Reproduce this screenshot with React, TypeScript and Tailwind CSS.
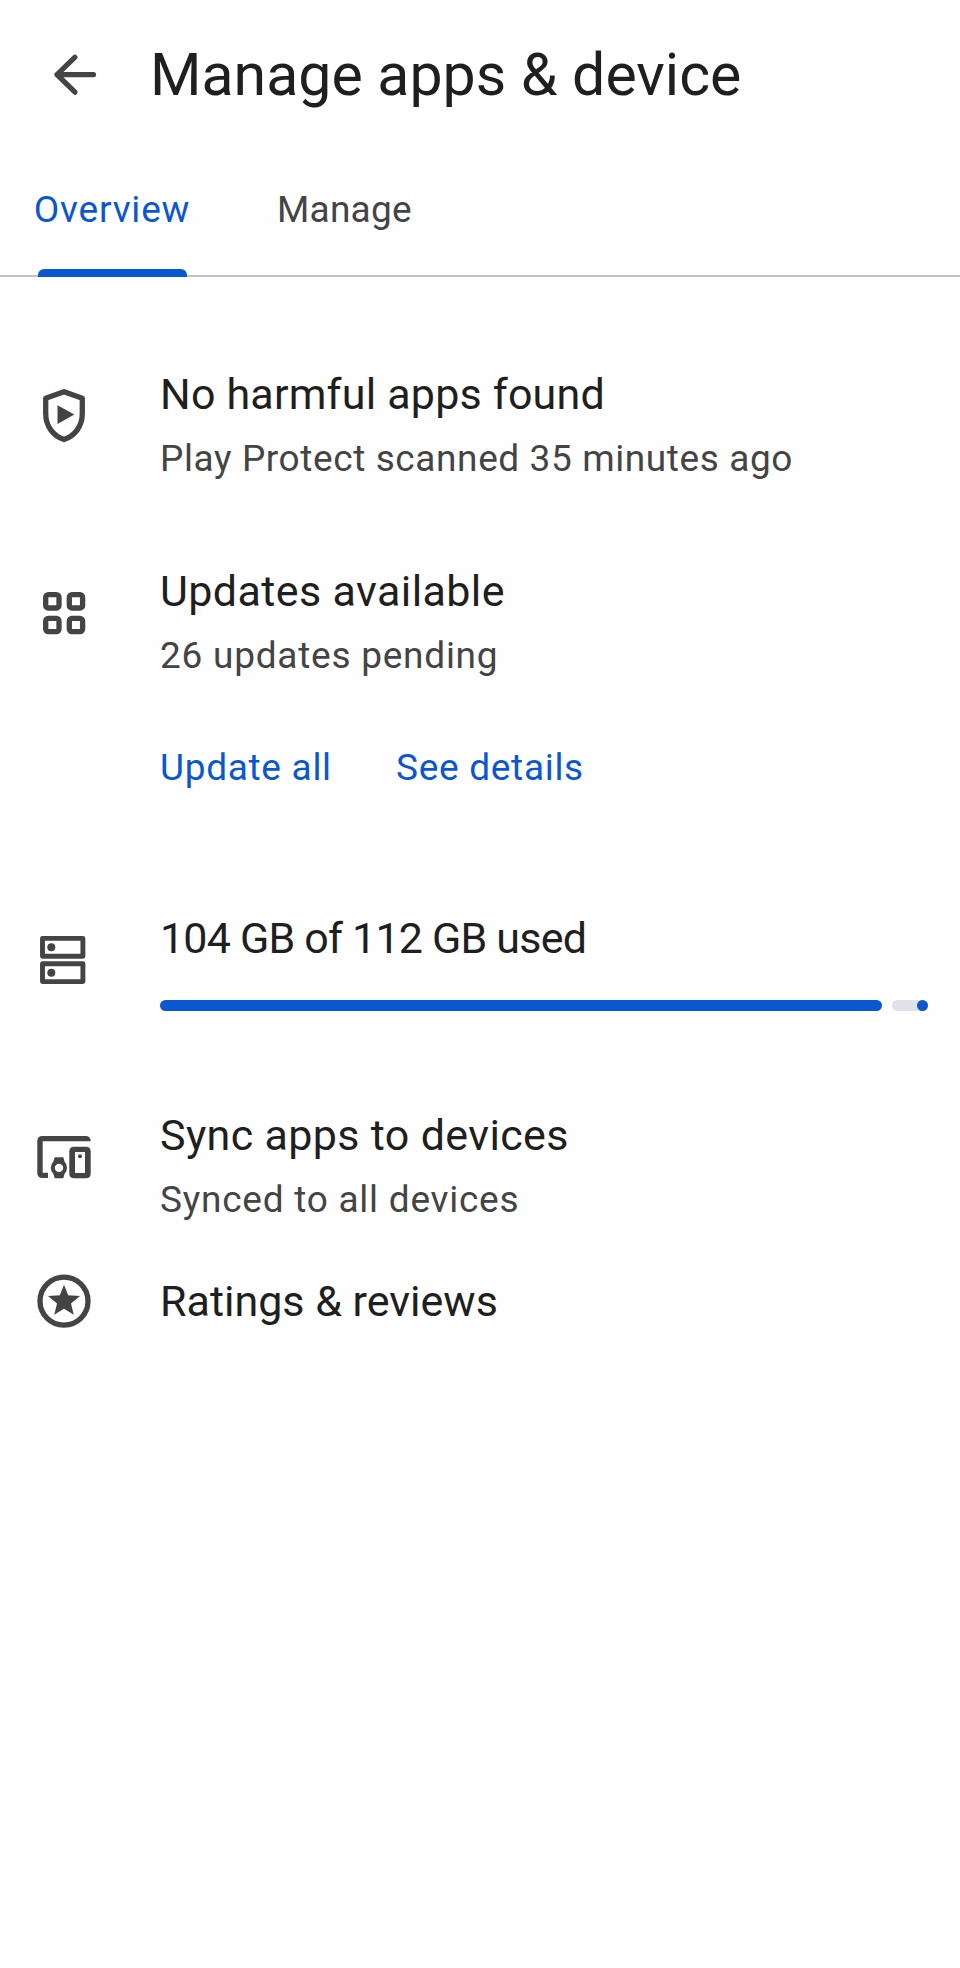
import type { ReactNode } from "react";

function Icon({ children }: { children: ReactNode }) {
  return (
    <svg className="size-16 shrink-0" viewBox="0 0 64 64" fill="currentColor">
      {children}
    </svg>
  );
}

const ShieldIcon = () => (
  <Icon>
    <path
      d="M32 7.7 50.3 14.2V29.5C50.3 42.5 42.5 52 32 55.5 21.5 52 13.7 42.5 13.7 29.5V14.2Z"
      fill="none"
      stroke="currentColor"
      strokeWidth="5.3"
      strokeLinejoin="round"
    />
    <path d="M25.5 21.3v18.6L42.3 30.5Z" />
  </Icon>
);

const AppsIcon = () => (
  <Icon>
    <g fill="none" stroke="currentColor" strokeWidth="5.3">
      <rect x="13.7" y="13.7" width="13.3" height="13.3" rx="2.6" />
      <rect x="37.3" y="13.7" width="13.3" height="13.3" rx="2.6" />
      <rect x="13.7" y="37.3" width="13.3" height="13.3" rx="2.6" />
      <rect x="37.3" y="37.3" width="13.3" height="13.3" rx="2.6" />
    </g>
  </Icon>
);

const StorageIcon = () => (
  <Icon>
    <g fill="none" stroke="currentColor" strokeWidth="4.9" strokeLinejoin="round">
      <rect x="10.5" y="10.4" width="40.4" height="17.8" />
      <rect x="10.5" y="35.8" width="40.4" height="17.8" />
    </g>
    <circle cx="19.3" cy="19.3" r="4" />
    <circle cx="19.3" cy="44.7" r="4" />
  </Icon>
);

const DevicesIcon = () => (
  <Icon>
    <path d="M5.3 16.3Q5.3 11 10.6 11H53.4Q58.7 11 58.7 16.3H10.7V47.7H16V53H10.6Q5.3 53 5.3 47.7Z" />
    <path
      fillRule="evenodd"
      d="M42 21.7H54Q58.7 21.7 58.7 26.4V48.6Q58.7 53.3 54 53.3H42Q37.3 53.3 37.3 48.6V26.4Q37.3 21.7 42 21.7ZM43 27V48H53V27Z"
    />
    <circle cx="48" cy="31.3" r="2" />
    <path
      fillRule="evenodd"
      d="M22.7 32.3H31.3L32.5 36.6Q35 39.3 35 42.8T32.5 49L31.3 53.3H22.7L21.4 49Q18.8 46.3 18.8 42.8T21.4 36.6ZM27 38.7A4.2 4.2 0 1 0 27 47.1 4.2 4.2 0 1 0 27 38.7Z"
    />
  </Icon>
);

const StarIcon = () => (
  <Icon>
    <circle cx="32" cy="32.2" r="24" fill="none" stroke="currentColor" strokeWidth="5.3" />
    <path d="M32 15.8 36.2 26.2 48 27.1 39 34.5 41.8 45.8 32 39.8 22.2 45.8 25 34.5 16 27.1 27.8 26.2Z" />
  </Icon>
);

type RowProps = {
  icon: ReactNode;
  className: string;
  children: ReactNode;
};

function Row({ icon, className, children }: RowProps) {
  return (
    <section className={`flex gap-16 px-8 ${className}`}>
      {icon}
      <div className="flex-1 whitespace-nowrap">{children}</div>
    </section>
  );
}

export default function App() {
  return (
    <main className="h-[1968px] w-[960px] overflow-hidden bg-[#fefefe] font-['Roboto',sans-serif] text-[#444444]">
      <header className="flex h-[150px] items-center pl-[43px]">
        <svg
          className="size-16 shrink-0"
          viewBox="0 0 64 64"
          fill="none"
          stroke="currentColor"
          strokeWidth="5.2"
          strokeLinecap="round"
          strokeLinejoin="round"
        >
          <path d="M50.5 31.6H14M32 14.2 14 31.6 32 49.2" />
        </svg>
        <h1 className="ml-[43px] whitespace-nowrap text-[59px] leading-[80px] text-[#1f1f1f]">
          Manage apps &amp; device
        </h1>
      </header>

      <nav className="flex h-[127px] border-b-2 border-[#c2c2c2] text-[37px] leading-[64px]">
        <div className="ml-8 flex h-[127px] w-[160px] flex-col items-center justify-between pt-7 text-[#0b57d0]">
          <span className="tracking-[0.8px]">Overview</span>
          <span className="h-2 w-[149px] rounded-t-md bg-[#0b57d0]" />
        </div>
        <span className="ml-[85px] pt-7 tracking-[0.25px]">Manage</span>
      </nav>

      <Row icon={<div className="pt-[22px]"><ShieldIcon /></div>} className="mt-[85px]">
        <h2 className="text-[43px] leading-[64px] tracking-[0.2px] text-[#1f1f1f]">No harmful apps found</h2>
        <p className="text-[37px] leading-[66px] tracking-[0.6px]">Play Protect scanned 35 minutes ago</p>
      </Row>

      <Row icon={<div className="pt-[22px]"><AppsIcon /></div>} className="mt-[67px]">
        <h2 className="text-[43px] leading-[64px] tracking-[0.4px] text-[#1f1f1f]">Updates available</h2>
        <p className="text-[37px] leading-[66px] tracking-[0.75px]">26 updates pending</p>
        <div className="mt-[47px] flex text-[37px] leading-[64px] tracking-[0.7px] text-[#0b57d0]">
          <button className="w-[236px] text-left">Update all</button>
          <button>See details</button>
        </div>
      </Row>

      <Row icon={<div className="pt-[22px]"><StorageIcon /></div>} className="mt-[106px]">
        <h2 className="text-[43px] leading-[64px] tracking-[-0.8px] text-[#1f1f1f]">104 GB of 112 GB used</h2>
        <div className="mt-[30px] flex h-[11px]">
          <span className="w-[722px] rounded-full bg-[#0b57d0]" />
          <span className="ml-2.5 flex w-9 justify-end rounded-full bg-[#e1e2e9]">
            <span className="size-[11px] rounded-full bg-[#0b57d0]" />
          </span>
        </div>
      </Row>

      <Row icon={<div className="pt-[22px]"><DevicesIcon /></div>} className="mt-[92px]">
        <h2 className="text-[43px] leading-[64px] tracking-[0.35px] text-[#1f1f1f]">Sync apps to devices</h2>
        <p className="text-[37px] leading-[66px] tracking-[0.75px]">Synced to all devices</p>
      </Row>

      <Row icon={<StarIcon />} className="mt-9">
        <h2 className="text-[43px] leading-[64px] text-[#1f1f1f]">Ratings &amp; reviews</h2>
      </Row>
    </main>
  );
}
